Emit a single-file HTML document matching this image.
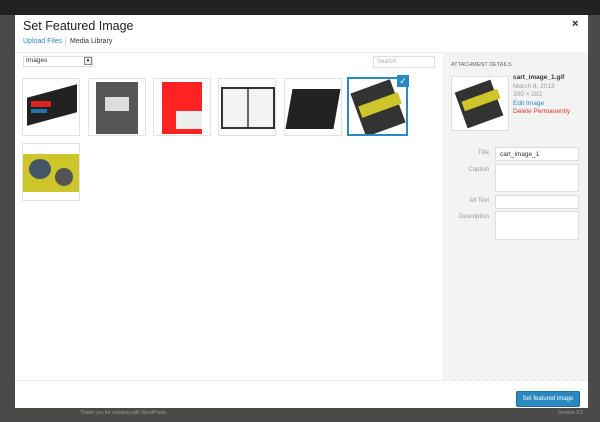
<!DOCTYPE html>
<html><head><style>
*{margin:0;padding:0;box-sizing:border-box}
body{width:600px;height:422px;background:#4a4b49;font-family:"Liberation Sans",sans-serif;position:relative;overflow:hidden}
.a{position:absolute}
.topbar{left:0;top:0;width:600px;height:15px;background:#222}
.modal{left:15px;top:15px;width:573px;height:393px;background:#fff}
.t{font-size:7px;color:#333}
.th{position:absolute;top:78px;width:58px;height:58px;border:1px solid #e2e2e2;background:#fff;overflow:hidden}
.in{position:absolute}
.lbl{position:absolute;font-size:6px;color:#999;text-align:right;width:40px}
.fld{position:absolute;left:495px;width:84px;background:#fff;border:1px solid #ddd}
</style></head><body>
<div class="a topbar"></div>
<div class="a" style="left:0;top:15px;width:15px;height:407px;background:#4a4b49"></div>
<div class="a modal"></div>
<div class="a" style="left:23px;top:19px;font-size:12.5px;color:#222">Set Featured Image</div>
<div class="a" style="left:572px;top:18px;font-size:11px;font-weight:bold;color:#222">×</div>
<div class="a" style="left:23px;top:38px;font-size:7px;color:#2a8abf">Upload Files</div>
<div class="a" style="left:65px;top:37px;width:1px;height:10px;background:#ddd"></div>
<div class="a" style="left:70px;top:38px;font-size:7px;color:#333">Media Library</div>
<div class="a" style="left:15px;top:52px;width:428px;border-top:1px dotted #ddd"></div>
<div class="a" style="left:443px;top:52px;width:145px;height:328px;background:#f3f3f3;border-left:1px solid #eee"></div>
<!-- select -->
<div class="a" style="left:23px;top:56px;width:70px;height:11px;border:1px solid #ddd;background:#fff"></div>
<div class="a t" style="left:26px;top:57px;font-size:6.5px">Images</div>
<div class="a" style="left:84px;top:57px;width:8px;height:8px;border:1px solid #888;background:#eee;font-size:5px;text-align:center;line-height:7px">▾</div>
<div class="a" style="left:373px;top:56px;width:62px;height:12px;border:1px solid #ddd;background:#fff;font-size:6px;color:#aaa;padding:2px 3px">Search</div>
<!-- thumbs -->
<div class="th" style="left:22px"><div class="in" style="left:4px;top:12px;width:50px;height:28px;background:#222;transform:skewY(-15deg)"></div><div class="in" style="left:8px;top:22px;width:20px;height:6px;background:#d22"></div><div class="in" style="left:8px;top:30px;width:16px;height:4px;background:#27a"></div></div>
<div class="th" style="left:88px"><div class="in" style="left:7px;top:3px;width:42px;height:52px;background:#555"></div><div class="in" style="left:16px;top:18px;width:24px;height:14px;background:#ddd"></div></div>
<div class="th" style="left:153px"><div class="in" style="left:8px;top:3px;width:40px;height:52px;background:#f22"></div><div class="in" style="left:22px;top:32px;width:26px;height:18px;background:#eee"></div></div>
<div class="th" style="left:218px"><div class="in" style="left:2px;top:8px;width:54px;height:42px;background:#333"></div><div class="in" style="left:4px;top:10px;width:50px;height:38px;background:#f4f4f4"></div><div class="in" style="left:28px;top:10px;width:2px;height:38px;background:#666"></div></div>
<div class="th" style="left:284px"><div class="in" style="left:4px;top:10px;width:48px;height:40px;background:#222;transform:skewX(-10deg)"></div></div>
<div class="th" style="left:347px;width:61px;height:59px;top:77px;border:2px solid #2a8abf"><div class="in" style="left:8px;top:6px;width:42px;height:46px;background:#333;transform:rotate(-20deg)"></div><div class="in" style="left:10px;top:20px;width:42px;height:12px;background:#cdc52a;transform:rotate(-20deg)"></div></div>
<div class="a" style="left:397px;top:75px;width:12px;height:12px;background:#2a8abf;color:#fff;font-size:9px;text-align:center;line-height:12px">✓</div>
<div class="th" style="left:22px;top:143px"><div class="in" style="left:0;top:10px;width:58px;height:38px;background:#cdc52a"></div><div class="in" style="left:6px;top:15px;width:22px;height:20px;background:#456;border-radius:50%"></div><div class="in" style="left:32px;top:24px;width:18px;height:18px;background:#555;border-radius:50%"></div></div>
<!-- sidebar -->
<div class="a" style="left:451px;top:62px;font-size:5.5px;color:#666">ATTACHMENT DETAILS</div>
<div class="a" style="left:451px;top:76px;width:58px;height:55px;border:1px solid #ddd;background:#fff"><div class="in" style="left:8px;top:8px;width:38px;height:38px;background:#333;transform:rotate(-20deg)"></div><div class="in" style="left:10px;top:18px;width:38px;height:10px;background:#cdc52a;transform:rotate(-20deg)"></div></div>
<div class="a" style="left:513px;top:74px;font-size:6.5px;line-height:8.5px">
<div style="color:#333;font-weight:bold">cart_image_1.gif</div>
<div style="color:#999">March 8, 2013</div>
<div style="color:#999">300 × 282</div>
<div style="color:#2a8abf">Edit Image</div>
<div style="color:#d33">Delete Permanently</div></div>
<div class="lbl" style="left:449px;top:150px">Title</div>
<div class="fld" style="top:147px;height:14px;font-size:6.5px;color:#333;padding:3px 4px">cart_image_1</div>
<div class="lbl" style="left:449px;top:167px">Caption</div>
<div class="fld" style="top:164px;height:28px"></div>
<div class="lbl" style="left:449px;top:198px">Alt Text</div>
<div class="fld" style="top:195px;height:14px"></div>
<div class="lbl" style="left:449px;top:214px">Description</div>
<div class="fld" style="top:211px;height:29px"></div>
<!-- footer -->
<div class="a" style="left:15px;top:380px;width:573px;border-top:1px dotted #ddd"></div>
<div class="a" style="left:516px;top:391px;width:64px;height:16px;background:#2a8abf;border:1px solid #1f6f9c;border-radius:2px;color:#fff;font-size:6px;text-align:center;line-height:14px">Set featured image</div>
<div class="a" style="left:80px;top:410px;font-size:5px;color:#999">Thank you for creating with WordPress.</div>
<div class="a" style="left:558px;top:410px;font-size:5px;color:#999">Version 3.5</div>
</body></html>
